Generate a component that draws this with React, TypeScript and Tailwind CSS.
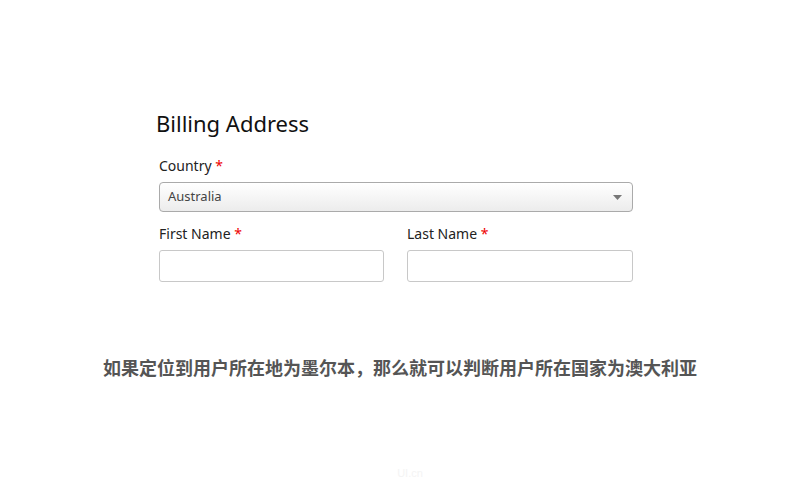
const sans = `font-['Noto_Sans','DejaVu_Sans',sans-serif]`;

function Label({ text }: { text: string }) {
  return (
    <p className={`text-[14px] leading-5 text-[#222] ${sans}`}>
      {text} <span className="text-[#e00]">*</span>
    </p>
  );
}

export default function App() {
  return (
    <div className="w-[800px] h-[491px] bg-white flex flex-col">
      <div className="pt-[108px] pl-[156px] w-[633px]">
        <h1 className={`text-[22px] leading-[30px] text-[#111] ${sans}`}>Billing Address</h1>

        <div className="pl-[3px] mt-[18px]">
          <Label text="Country" />
          <div className="mt-[6px] h-[30px] flex items-center justify-between rounded-[4px] border border-[#aaa] bg-gradient-to-b from-white to-[#ececec] pl-2 pr-[10px]">
            <span className={`text-[13px] text-[#444] ${sans}`}>Australia</span>
            <svg width="9" height="5" viewBox="0 0 9 5">
              <path d="M0 0 L9 0 L4.5 5 Z" fill="#777" />
            </svg>
          </div>

          <div className="mt-[12px] grid grid-cols-[225px_1fr] gap-[23px]">
            <div>
              <Label text="First Name" />
              <div className="mt-[6px] h-[32px] rounded-[3px] border border-[#c8c8c8] bg-white" />
            </div>
            <div>
              <Label text="Last Name" />
              <div className="mt-[6px] h-[32px] rounded-[3px] border border-[#c8c8c8] bg-white" />
            </div>
          </div>
        </div>
      </div>

      <p className={`mt-[72px] text-center text-[18px] font-bold text-[#555] font-['Noto_Sans_CJK_SC',sans-serif]`}>
        如果定位到用户所在地为墨尔本，那么就可以判断用户所在国家为澳大利亚
      </p>

      <p className="mt-auto mb-[10px] text-center text-[11px] text-[#f4f4f4] font-['Liberation_Sans',sans-serif] pl-[20px]">
        UI.cn
      </p>
    </div>
  );
}
